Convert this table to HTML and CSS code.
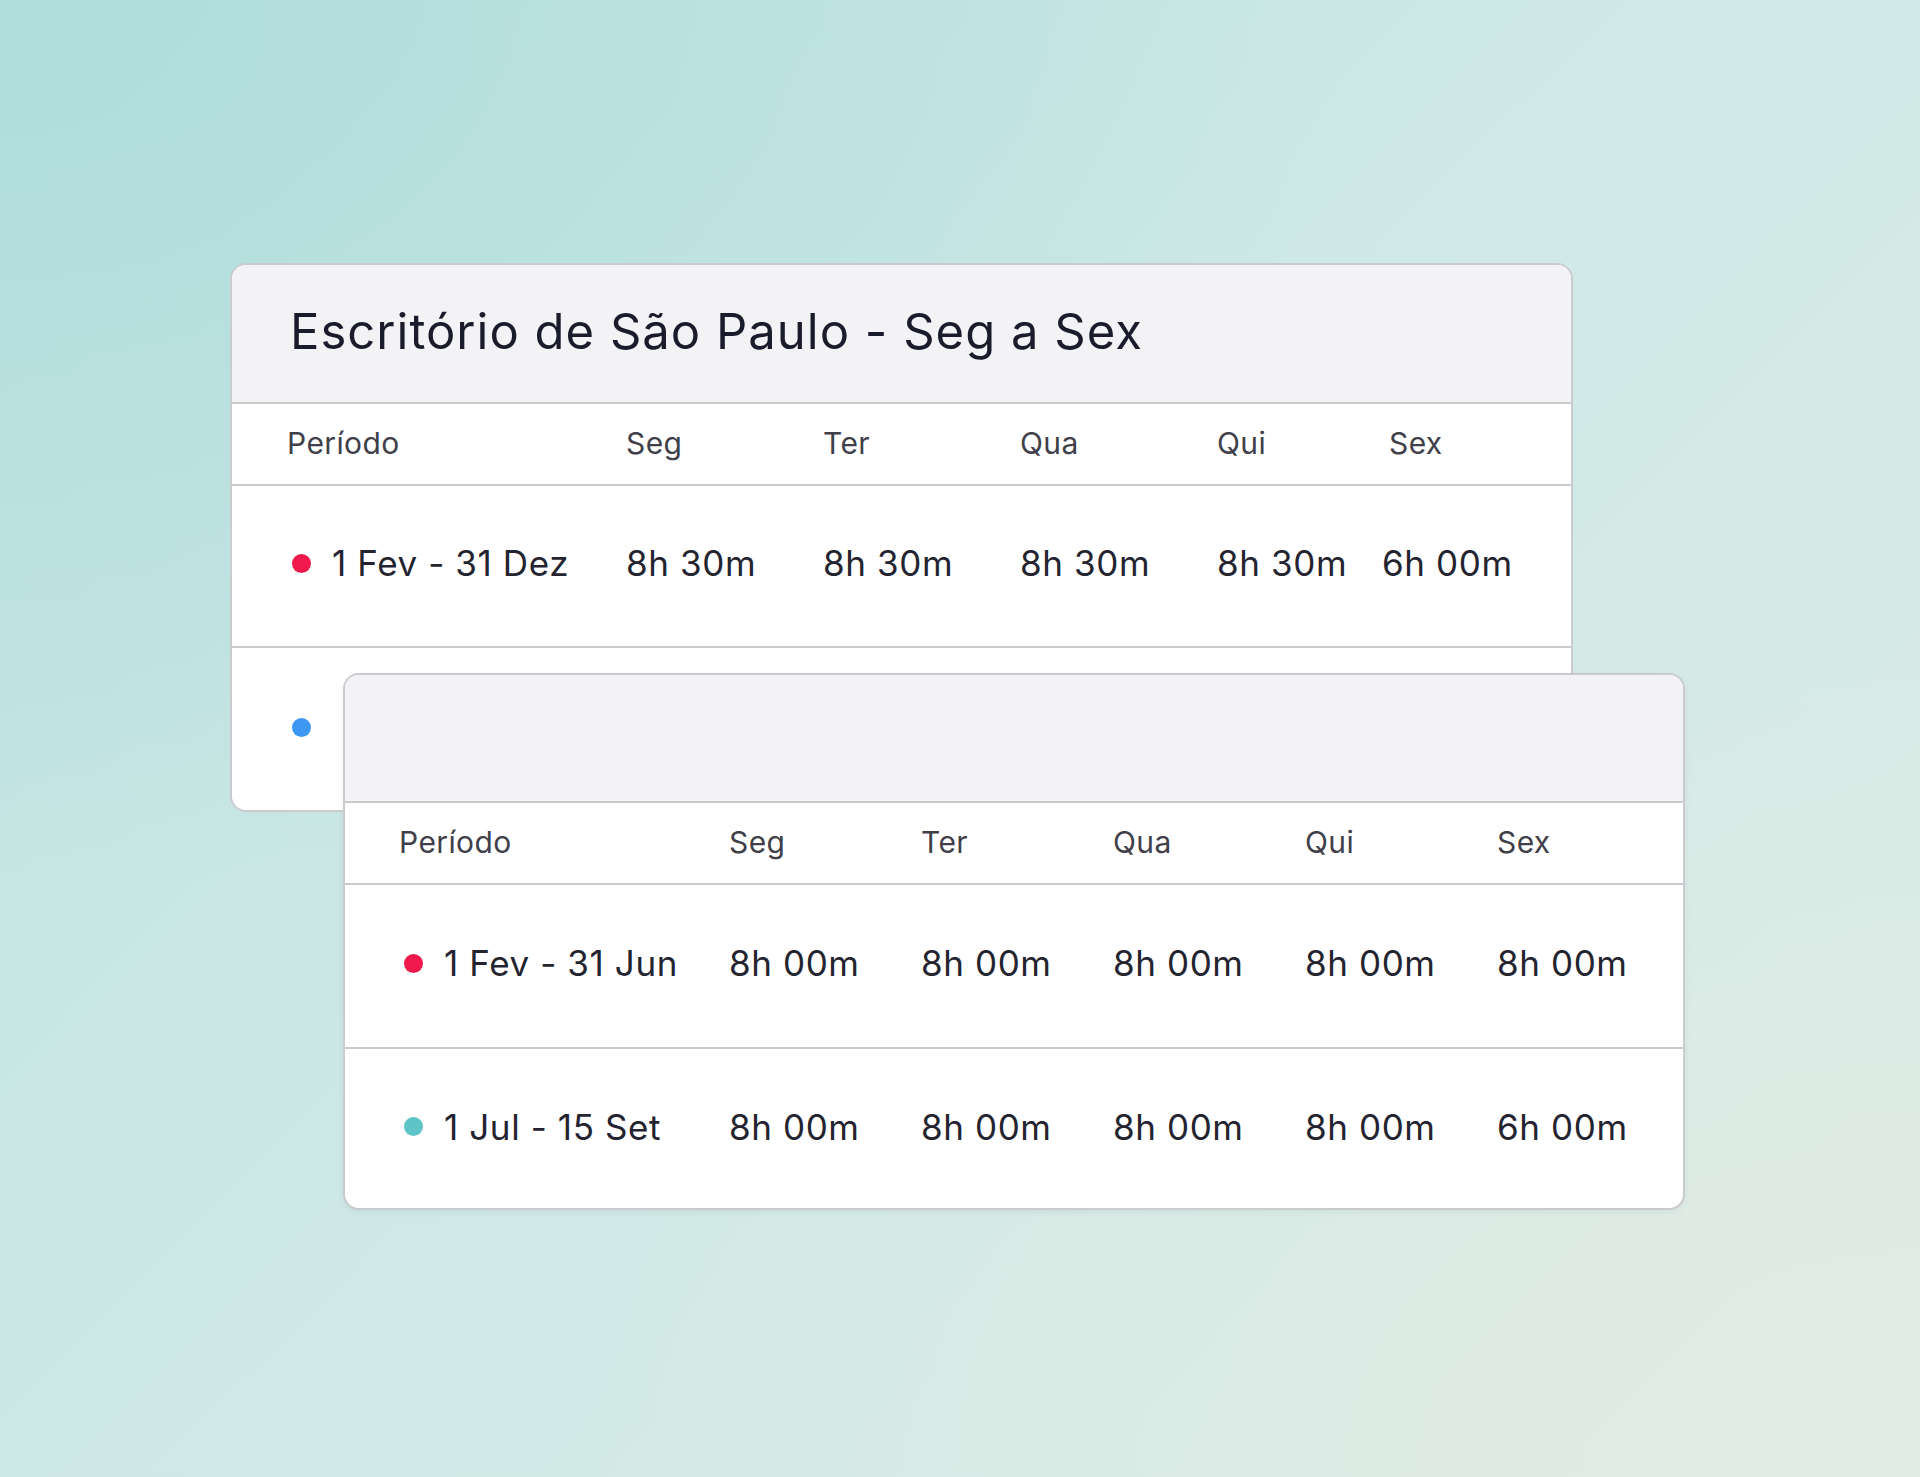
FILE: index.html
```html
<!DOCTYPE html>
<html lang="pt-BR">
<head>
<meta charset="utf-8">
<title>Horários</title>
<link rel="stylesheet" href="styles.css">
</head>
<body>
<main class="stage">
  <section class="card card-back">
    <header class="card-head">
      <h1 class="card-title">Escritório de São Paulo - Seg a Sex</h1>
    </header>
    <div class="grid grid-a col-head">
      <span>Período</span><span>Seg</span><span>Ter</span><span>Qua</span><span>Qui</span><span class="sex-a">Sex</span>
    </div>
    <div class="grid grid-a row row-a1">
      <span class="period"><i class="dot dot-red"></i>1 Fev - 31 Dez</span>
      <span>8h 30m</span><span>8h 30m</span><span>8h 30m</span><span>8h 30m</span><span>6h 00m</span>
    </div>
    <div class="grid grid-a row row-a2">
      <span class="period"><i class="dot dot-blue"></i></span>
    </div>
  </section>

  <section class="card card-front">
    <header class="card-head card-head-empty"></header>
    <div class="grid grid-b col-head">
      <span>Período</span><span>Seg</span><span>Ter</span><span>Qua</span><span>Qui</span><span>Sex</span>
    </div>
    <div class="grid grid-b row row-b1">
      <span class="period"><i class="dot dot-red"></i>1 Fev - 31 Jun</span>
      <span>8h 00m</span><span>8h 00m</span><span>8h 00m</span><span>8h 00m</span><span>8h 00m</span>
    </div>
    <div class="grid grid-b row row-b2">
      <span class="period"><i class="dot dot-teal"></i>1 Jul - 15 Set</span>
      <span>8h 00m</span><span>8h 00m</span><span>8h 00m</span><span>8h 00m</span><span>6h 00m</span>
    </div>
  </section>
</main>
</body>
</html>
```

FILE: styles.css
```css
* { box-sizing: border-box; }

html, body {
  margin: 0;
  height: 100%;
}

body {
  width: 1920px;
  height: 1477px;
  overflow: hidden;
  font-family: Inter, "Liberation Sans", sans-serif;
  background:
    radial-gradient(ellipse 70% 60% at 0% 0%, #afdddc 0%, rgba(175,221,220,0) 100%),
    radial-gradient(ellipse 70% 60% at 100% 100%, #e1ece4 0%, rgba(225,236,228,0) 100%),
    linear-gradient(135deg, #bde2e0 0%, #cfe9e6 50%, #dcebe6 100%);
}

.stage {
  display: flex;
  flex-direction: column;
  align-items: flex-start;
  padding: 263px 0 0 230px;
}

.card {
  background: #ffffff;
  border: 2px solid #c9cbce;
  border-radius: 16px;
  overflow: hidden;
}

.card-back {
  width: 1343px;
}

.card-front {
  position: relative;
  z-index: 1;
  width: 1342px;
  margin: -139px 0 0 113px;
  box-shadow: 0 2px 6px rgba(60, 80, 90, 0.08);
}

.card-head {
  display: flex;
  align-items: center;
  height: 139px;
  padding: 0 0 4px 58px;
  background: #f3f3f5;
  border-bottom: 2px solid #c9cbce;
}

.card-head-empty {
  height: 128px;
}

.card-title {
  margin: 0;
  font-size: 49px;
  font-weight: 400;
  color: #1b1c2b;
  letter-spacing: 1px;
}

.grid {
  display: grid;
  align-items: center;
}

.grid-a {
  grid-template-columns: 339px 197px 197px 197px 165px 1fr;
  padding-left: 55px;
}

.grid-b {
  grid-template-columns: 330px 192px 192px 192px 192px 1fr;
  padding-left: 54px;
}

.col-head {
  height: 82px;
  border-bottom: 2px solid #c9cbce;
  font-size: 30px;
  letter-spacing: 0.4px;
  color: #3f4049;
  padding-bottom: 2px;
}

.sex-a { padding-left: 7px; }

.row {
  font-size: 35px;
  letter-spacing: 0.6px;
  color: #23242f;
}

.row-a1 { height: 162px; border-bottom: 2px solid #c9cbce; padding-bottom: 6px; }
.row-a2 { height: 162px; padding-bottom: 4px; }
.row-b1 { height: 164px; border-bottom: 2px solid #c9cbce; padding-bottom: 6px; }
.row-b2 { height: 159px; padding-bottom: 4px; }

.period {
  display: flex;
  align-items: center;
  white-space: nowrap;
}

.dot {
  display: inline-block;
  width: 19px;
  height: 19px;
  border-radius: 50%;
  margin: 0 21px 0 5px;
  flex: none;
}

.dot-red { background: #ef1a4b; }
.dot-blue { background: #3d98f4; }
.dot-teal { background: #5fc4c8; }
```
